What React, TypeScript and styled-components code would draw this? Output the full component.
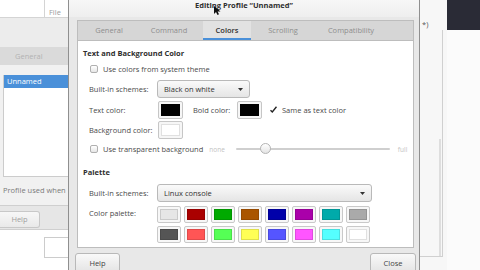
import styled, { createGlobalStyle } from "styled-components";

const GlobalStyle = createGlobalStyle`
  html, body {
    margin: 0;
    padding: 0;
  }
  body {
    width: 480px;
    height: 270px;
    overflow: hidden;
    background: #f3f3f3;
    font-family: "Open Sans", "DejaVu Sans", sans-serif;
    font-size: 7.5px;
    color: #3a3a3a;
  }
  * {
    box-sizing: border-box;
  }
`;

const palette = [
  ["#e6e6e6", "#aa0000", "#00aa00", "#aa5500", "#0000aa", "#aa00aa", "#00aaaa", "#aaaaaa"],
  ["#555555", "#ff5555", "#55ff55", "#ffff55", "#5555ff", "#ff55ff", "#55ffff", "#ffffff"],
];

const tabs = [
  { label: "General", w: 62 },
  { label: "Command", w: 58 },
  { label: "Colors", w: 48, active: true },
  { label: "Scrolling", w: 54 },
  { label: "Compatibility", w: 82 },
];

export default function App() {
  return (
    <>
      <GlobalStyle />
      <Desktop>
        <BackWindow>
          <BackTop>
            <FileCell>File</FileCell>
          </BackTop>
          <BackToolbar />
          <BackHeader>General</BackHeader>
          <BackBody>
            <ProfileList>
              <SelectedRow>Unnamed</SelectedRow>
            </ProfileList>
            <Hint>Profile used when</Hint>
          </BackBody>
          <BackFooter>
            <GhostButton>Help</GhostButton>
          </BackFooter>
          <BackBottom>
            <GhostBox />
          </BackBottom>
        </BackWindow>

        <Dialog>
          <TitleBar>Editing Profile “Unnamed”</TitleBar>
          <Cursor viewBox="0 0 7 9">
            <path d="M0 0 L0 8 L2 6 L3.5 9 L5 8.3 L3.6 5.5 L6.5 5.5 Z" fill="#111" />
          </Cursor>
          <DialogBody>
            <TabBar>
              {tabs.map((t) => (
                <Tab key={t.label} $w={t.w} $active={!!t.active}>
                  {t.label}
                </Tab>
              ))}
            </TabBar>
            <Page>
              <Heading>Text and Background Color</Heading>
              <Section>
                <CheckRow $mt={4}>
                  <CheckBox />
                  <CheckText>Use colors from system theme</CheckText>
                </CheckRow>
                <Row $mt={4}>
                  <Label>Built-in schemes:</Label>
                  <Combo $w={93}>
                    <span>Black on white</span>
                    <Arrow viewBox="0 0 5 3">
                      <path d="M0 0 L5 0 L2.5 3 Z" fill="#333" />
                    </Arrow>
                  </Combo>
                </Row>
                <Row $mt={3}>
                  <Label>Text color:</Label>
                  <Swatch>
                    <Fill $c="#000000" />
                  </Swatch>
                  <SideLabel>Bold color:</SideLabel>
                  <Swatch>
                    <Fill $c="#000000" />
                  </Swatch>
                  <CheckBox $checked $ml={7}>
                    <svg viewBox="0 0 8 8" width="8" height="8">
                      <path d="M1.5 4.2 L3.3 6 L7.5 0.8" stroke="#222" strokeWidth="1.4" fill="none" />
                    </svg>
                  </CheckBox>
                  <CheckText>Same as text color</CheckText>
                </Row>
                <Row $mt={2}>
                  <Label>Background color:</Label>
                  <Swatch>
                    <Fill $c="#ffffff" />
                  </Swatch>
                </Row>
                <CheckRow $mt={3}>
                  <CheckBox />
                  <CheckText>Use transparent background</CheckText>
                  <Dim $ml={6}>none</Dim>
                  <Slider>
                    <Knob />
                  </Slider>
                  <Dim $ml={8}>full</Dim>
                </CheckRow>
              </Section>

              <Heading $mt={11}>Palette</Heading>
              <Section>
                <Row $mt={7}>
                  <Label>Built-in schemes:</Label>
                  <Combo $w={215}>
                    <span>Linux console</span>
                    <Arrow viewBox="0 0 5 3">
                      <path d="M0 0 L5 0 L2.5 3 Z" fill="#333" />
                    </Arrow>
                  </Combo>
                </Row>
                <PaletteRow>
                  <TopLabel>Color palette:</TopLabel>
                  <PaletteGrid>
                    {palette.flat().map((c, i) => (
                      <PaletteSwatch key={i}>
                        <Fill $c={c} />
                      </PaletteSwatch>
                    ))}
                  </PaletteGrid>
                </PaletteRow>
              </Section>
            </Page>
            <ButtonRow>
              <Button $w={45}>Help</Button>
              <Button $w={46}>Close</Button>
            </ButtonRow>
          </DialogBody>
        </Dialog>

        <RightGutter>
          <GutterText>*)</GutterText>
          <GutterBox>
            <ScrollThumb />
          </GutterBox>
        </RightGutter>
        <RightPanel>
          <DarkBar />
        </RightPanel>
      </Desktop>
    </>
  );
}

const Desktop = styled.div`
  display: flex;
  width: 480px;
  height: 270px;
  overflow: hidden;
`;

/* background preferences window */
const BackWindow = styled.div`
  width: 68px;
  display: flex;
  flex-direction: column;
  background: #f1f1f1;
`;

const BackTop = styled.div`
  height: 18px;
  display: flex;
  justify-content: flex-end;
  background: #ffffff;
  border-bottom: 1px solid #d4d4d4;
`;

const FileCell = styled.div`
  width: 24px;
  border-left: 1px solid #d4d4d4;
  color: #9c9c9c;
  padding: 8px 0 0 4px;
  line-height: 9px;
`;

const BackToolbar = styled.div`
  height: 29px;
  background: #ececec;
`;

const BackHeader = styled.div`
  height: 18px;
  line-height: 18px;
  padding-left: 15px;
  background: #dadada;
  color: #b3b3b3;
`;

const BackBody = styled.div`
  height: 140px;
  padding: 10px 0 0 3px;
`;

const ProfileList = styled.div`
  height: 102px;
  background: #ffffff;
  border-left: 1px solid #cccccc;
  border-bottom: 1px solid #cccccc;
`;

const SelectedRow = styled.div`
  height: 13px;
  line-height: 13px;
  padding-left: 3px;
  background: #4a90d9;
  color: #ffffff;
`;

const Hint = styled.div`
  margin-top: 8px;
  line-height: 10px;
  white-space: nowrap;
  color: #7a7a7a;
`;

const BackFooter = styled.div`
  height: 25px;
  padding-top: 5px;
  background: #e6e6e6;
  border-top: 1px solid #cfcfcf;
  border-bottom: 1px solid #cfcfcf;
`;

const GhostButton = styled.div`
  width: 40px;
  height: 17px;
  line-height: 15px;
  text-align: center;
  color: #a0a0a0;
  border: 1px solid #c8c8c8;
  border-left: none;
  border-radius: 0 3px 3px 0;
  background: linear-gradient(#f7f7f7, #e9e9e9);
`;

const BackBottom = styled.div`
  flex: 1;
  background: #ffffff;
  padding: 7px 0 0 44px;
`;

const GhostBox = styled.div`
  width: 24px;
  height: 21px;
  border: 1px solid #cccccc;
  border-right: none;
`;

/* profile dialog */
const Dialog = styled.div`
  position: relative;
  width: 352px;
  height: 270px;
  background: #e8e8e8;
  border-left: 1px solid #8f8f8f;
  border-right: 1px solid #8f8f8f;
`;

const TitleBar = styled.div`
  height: 17px;
  line-height: 10px;
  text-align: center;
  font-weight: 700;
  color: #2e2e2e;
  background: linear-gradient(#f7f7f7, #eeeeee);
`;

const Cursor = styled.svg`
  position: absolute;
  left: 145px;
  top: 6px;
  width: 7px;
  height: 9px;
`;

const DialogBody = styled.div`
  padding: 3px 5px 0 8px;
`;

const TabBar = styled.div`
  display: flex;
  height: 20px;
  background: #d6d6d6;
  border: 1px solid #bdbdbd;
  border-bottom: none;
`;

const Tab = styled.div<{ $w: number; $active: boolean }>`
  width: ${(p) => p.$w}px;
  margin: ${(p) => (p.$active ? "0 5px" : "0")};
  line-height: 19px;
  text-align: center;
  color: ${(p) => (p.$active ? "#2e2e2e" : "#8e8e8e")};
  font-weight: ${(p) => (p.$active ? 600 : 400)};
  background: ${(p) => (p.$active ? "#e2e2e2" : "transparent")};
  box-shadow: ${(p) => (p.$active ? "inset 0 -2px 0 #4a90d9" : "none")};
`;

const Page = styled.div`
  height: 208px;
  background: #ffffff;
  border: 1px solid #bdbdbd;
  padding: 7px 0 0 5px;
`;

const Heading = styled.div<{ $mt?: number }>`
  margin-top: ${(p) => p.$mt ?? 0}px;
  line-height: 10px;
  font-weight: 700;
  color: #2e2e2e;
`;

const Section = styled.div`
  padding-left: 6px;
`;

const Row = styled.div<{ $mt: number }>`
  display: flex;
  align-items: center;
  height: 18px;
  margin-top: ${(p) => p.$mt}px;
`;

const CheckRow = styled(Row)`
  height: 14px;
  padding-left: 1px;
`;

const Label = styled.div`
  width: 68px;
  white-space: nowrap;
  color: #4a4a4a;
`;

const SideLabel = styled.div`
  width: 43px;
  margin-left: 10px;
  white-space: nowrap;
  color: #4a4a4a;
`;

const TopLabel = styled(Label)`
  line-height: 14px;
  align-self: flex-start;
`;

const CheckBox = styled.div<{ $checked?: boolean; $ml?: number }>`
  width: 8px;
  height: 8px;
  margin-left: ${(p) => p.$ml ?? 0}px;
  display: flex;
  align-items: center;
  justify-content: center;
  border: ${(p) => (p.$checked ? "none" : "1px solid #b0b0b0")};
  border-radius: 2px;
  background: ${(p) => (p.$checked ? "transparent" : "linear-gradient(#ffffff, #e6e6e6)")};
  flex-shrink: 0;
`;

const CheckText = styled.div`
  margin-left: 5px;
  white-space: nowrap;
  color: #4a4a4a;
`;

const Dim = styled.div<{ $ml: number }>`
  margin-left: ${(p) => p.$ml}px;
  color: #c2c2c2;
  font-size: 6.5px;
`;

const Slider = styled.div`
  position: relative;
  width: 154px;
  height: 2px;
  margin-left: 11px;
  background: #cfcfcf;
  border-radius: 1px;
`;

const Knob = styled.div`
  position: absolute;
  left: 24px;
  top: -5px;
  width: 11px;
  height: 11px;
  border-radius: 50%;
  border: 1px solid #b4b4b4;
  background: linear-gradient(#ffffff, #e4e4e4);
`;

const Combo = styled.div<{ $w: number }>`
  width: ${(p) => p.$w}px;
  height: 18px;
  display: flex;
  align-items: center;
  justify-content: space-between;
  padding: 0 6px;
  border: 1px solid #b9b9b9;
  border-radius: 3px;
  background: linear-gradient(#fafafa, #e5e5e5);
  color: #333333;
`;

const Arrow = styled.svg`
  width: 5px;
  height: 3px;
`;

const Swatch = styled.div`
  width: 25px;
  height: 18px;
  margin-left: 1px;
  padding: 2px;
  border: 1px solid #c6c6c6;
  border-radius: 2px;
  background: #f6f6f6;
  flex-shrink: 0;
`;

const Fill = styled.div<{ $c: string }>`
  width: 100%;
  height: 100%;
  background: ${(p) => p.$c};
  border: 1px solid rgba(0, 0, 0, 0.12);
`;

const PaletteRow = styled.div`
  display: flex;
  margin-top: 4px;
`;

const PaletteGrid = styled.div`
  display: grid;
  grid-template-columns: repeat(8, 24px);
  grid-auto-rows: 17px;
  column-gap: 3px;
  row-gap: 3px;
`;

const PaletteSwatch = styled.div`
  padding: 2px;
  border: 1px solid #c9c9c9;
  border-radius: 2px;
  background: #f7f7f7;
`;

const ButtonRow = styled.div`
  display: flex;
  justify-content: space-between;
  margin: 5px -2px 0 -2px;
`;

const Button = styled.div<{ $w: number }>`
  width: ${(p) => p.$w}px;
  height: 20px;
  line-height: 18px;
  text-align: center;
  color: #444444;
  border: 1px solid #b8b8b8;
  border-radius: 3px;
  background: linear-gradient(#f9f9f9, #e4e4e4);
`;

/* right side of the desktop */
const RightGutter = styled.div`
  width: 27px;
  background: #f7f7f7;
`;

const GutterText = styled.div`
  height: 30px;
  padding: 20px 0 0 2px;
  line-height: 8px;
  color: #555555;
`;

const GutterBox = styled.div`
  width: 23px;
  height: 227px;
  display: flex;
  flex-direction: column;
  justify-content: flex-end;
  align-items: flex-end;
  border-right: 1px solid #d0d0d0;
  border-bottom: 1px solid #d0d0d0;
`;

const ScrollThumb = styled.div`
  width: 2px;
  height: 117px;
  margin-right: 1px;
  background: #dedede;
`;

const RightPanel = styled.div`
  flex: 1;
  background: #fbfbfb;
`;

const DarkBar = styled.div`
  height: 30px;
  background: #2a2b36;
`;
